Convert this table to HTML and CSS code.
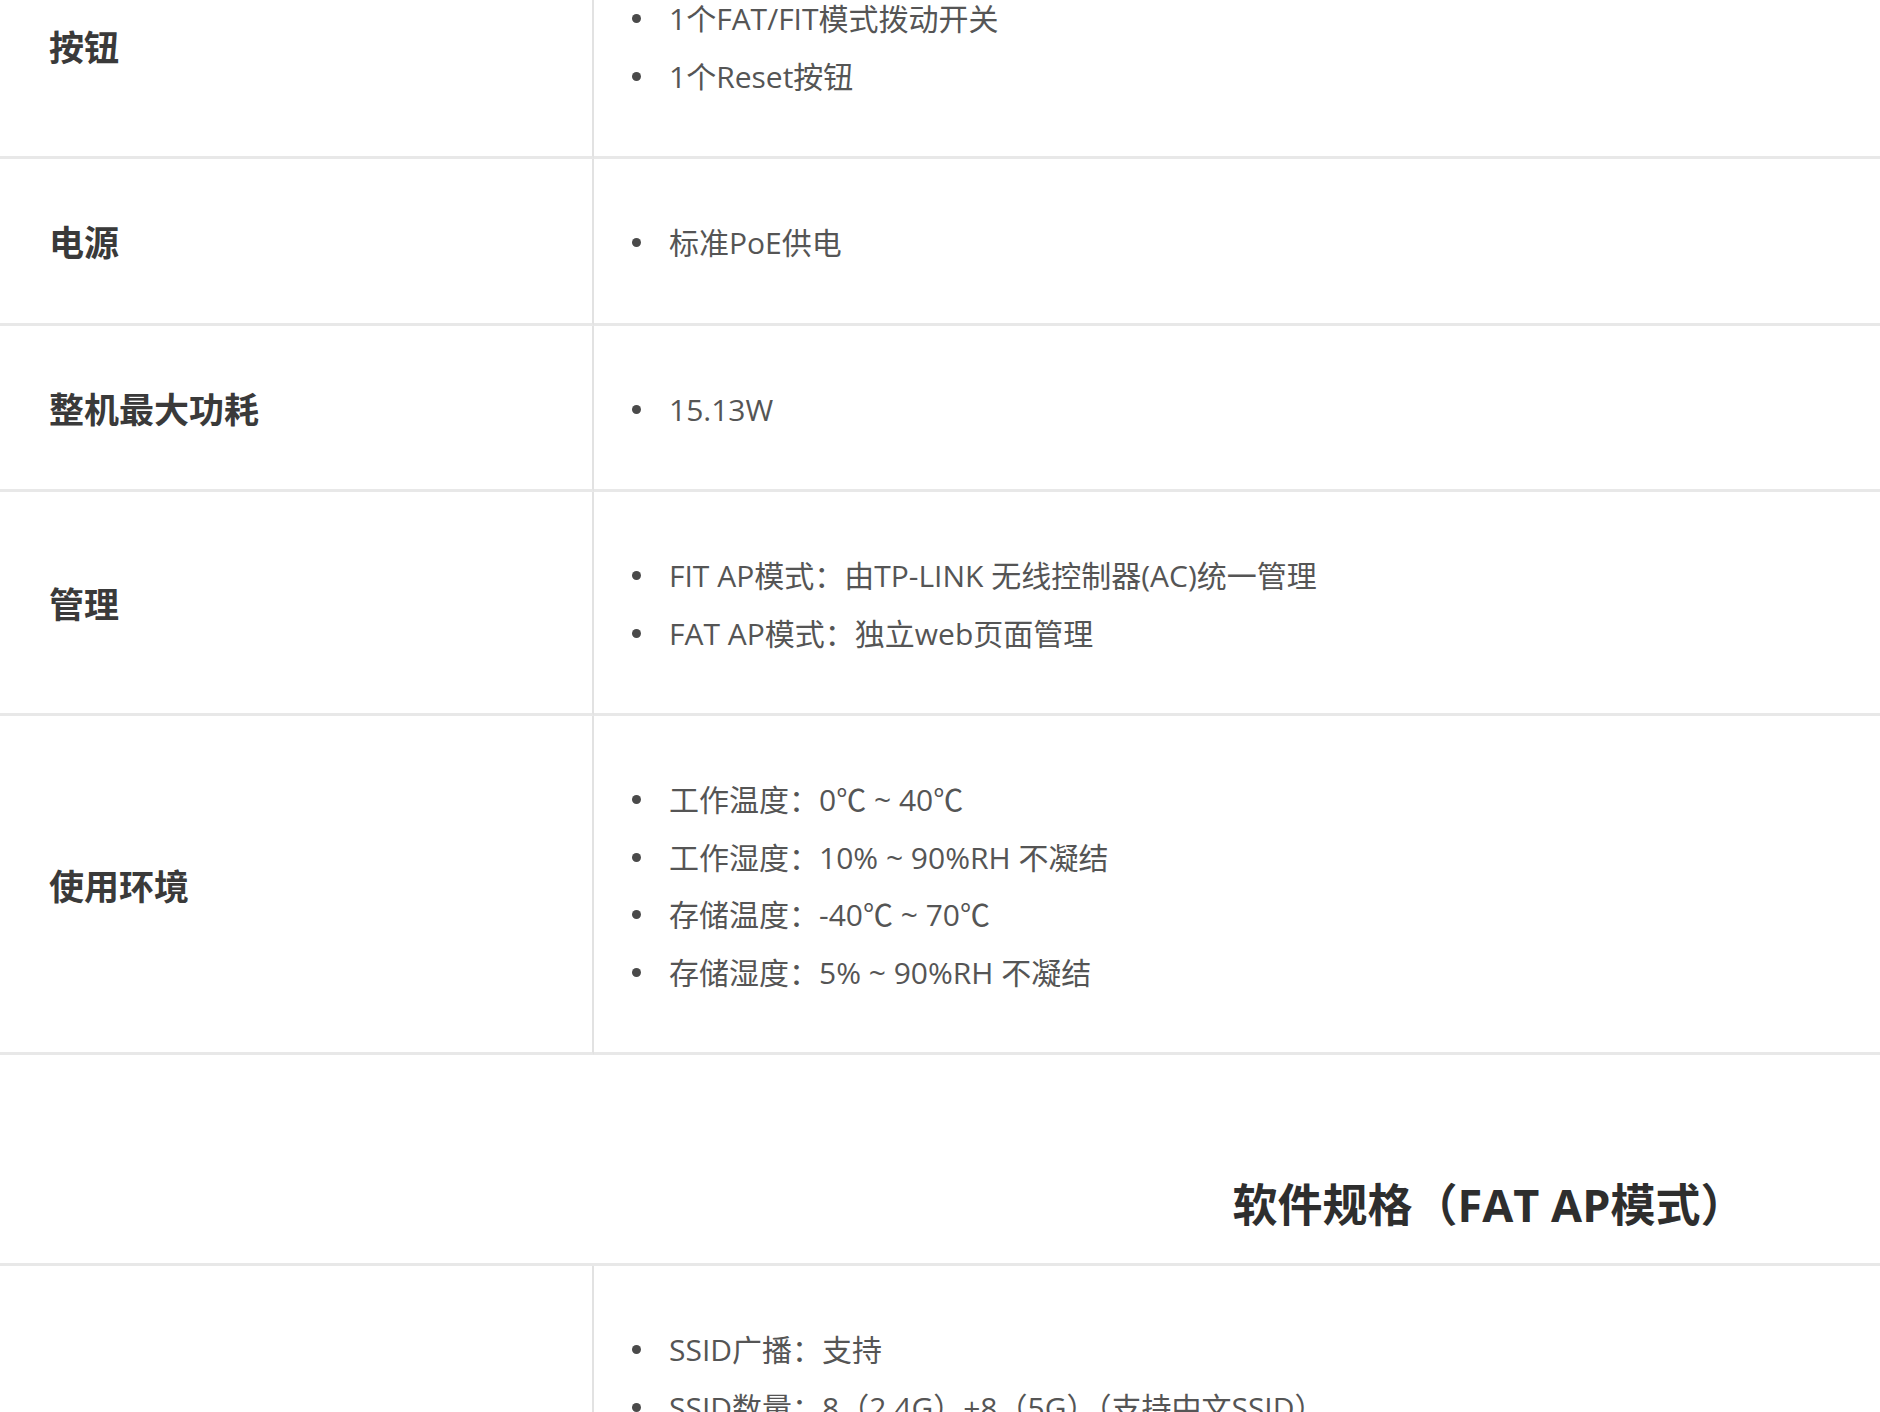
FILE: index.html
```html
<!DOCTYPE html>
<html lang="zh-CN">
<head>
<meta charset="utf-8">
<title>规格参数</title>
<link rel="stylesheet" href="styles.css">
</head>
<body>
<div class="page">
<table class="spec">
  <tbody>
    <tr>
      <th class="label">按钮</th>
      <td class="value">
        <ul class="items">
          <li>1个FAT/FIT模式拨动开关</li>
          <li>1个Reset按钮</li>
        </ul>
      </td>
    </tr>
    <tr>
      <th class="label">电源</th>
      <td class="value">
        <ul class="items">
          <li>标准PoE供电</li>
        </ul>
      </td>
    </tr>
    <tr>
      <th class="label">整机最大功耗</th>
      <td class="value">
        <ul class="items">
          <li>15.13W</li>
        </ul>
      </td>
    </tr>
    <tr>
      <th class="label">管理</th>
      <td class="value">
        <ul class="items">
          <li>FIT AP模式：由TP-LINK 无线控制器(AC)统一管理</li>
          <li>FAT AP模式：独立web页面管理</li>
        </ul>
      </td>
    </tr>
    <tr>
      <th class="label">使用环境</th>
      <td class="value">
        <ul class="items">
          <li>工作温度：0℃ ~ 40℃</li>
          <li>工作湿度：10% ~ 90%RH 不凝结</li>
          <li>存储温度：-40℃ ~ 70℃</li>
          <li>存储湿度：5% ~ 90%RH 不凝结</li>
        </ul>
      </td>
    </tr>
    <tr class="section">
      <td class="section-cell" colspan="2">
        <h2 class="section-title">软件规格（FAT AP模式）</h2>
      </td>
    </tr>
    <tr>
      <th class="label"></th>
      <td class="value">
        <ul class="items">
          <li>SSID广播：支持</li>
          <li>SSID数量：8（2.4G）+8（5G）（支持中文SSID）</li>
          <li>SSID隐藏：支持</li>
        </ul>
      </td>
    </tr>
  </tbody>
</table>
</div>
</body>
</html>
```
FILE: styles.css
```css
html, body {
  margin: 0;
  padding: 0;
  background: #ffffff;
  overflow: hidden;
}

body {
  font-family: "Open Sans", "Noto Sans CJK SC", sans-serif;
  color: #555555;
}

.page {
  width: 2978px;
  margin-top: -65px;
}

.spec {
  width: 100%;
  border-collapse: separate;
  border-spacing: 0;
}

.spec th,
.spec td {
  border-bottom: 3px solid #e8e8e8;
}

.label {
  width: 543px;
  padding: 0 0 0 49px;
  border-right: 2px solid #e2e2e2;
  text-align: left;
  vertical-align: middle;
  font-size: 35px;
  font-weight: 700;
  color: #3a3a3a;
  white-space: nowrap;
}

.value {
  padding: 55px 0 51px 38px;
  vertical-align: middle;
}

.items {
  list-style: none;
  margin: 0;
  padding: 0;
}

.items li {
  display: flex;
  align-items: center;
  font-size: 30px;
  line-height: 57.5px;
  color: #555555;
  white-space: nowrap;
}

.items li::before {
  content: "";
  flex: none;
  width: 9px;
  height: 9px;
  border-radius: 50%;
  background: #4a4a4a;
  margin-right: 28px;
}

.section-cell {
  padding: 120px 0 28px 0;
  text-align: center;
}

.section-title {
  margin: 0;
  font-size: 45px;
  line-height: 60px;
  font-weight: 700;
  color: #2e2e2e;
}
```
